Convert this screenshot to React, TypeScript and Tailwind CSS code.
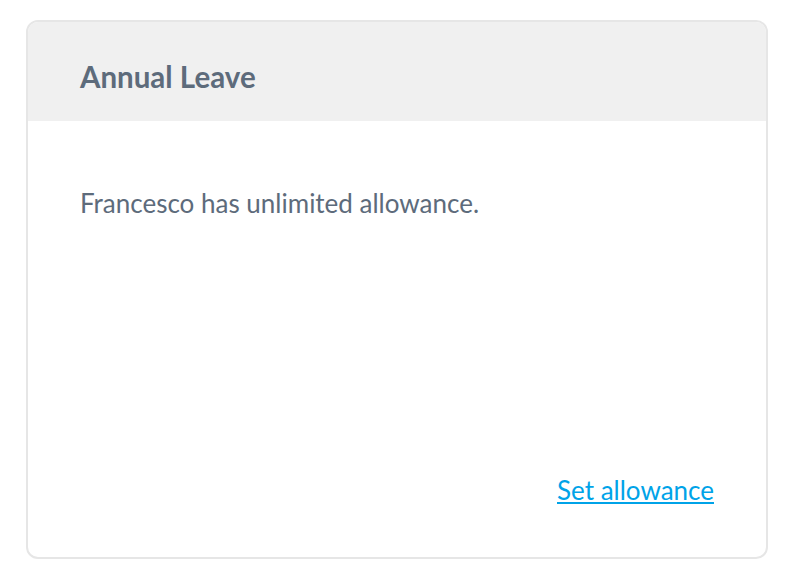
export default function App() {
  return (
    <div className="w-[791px] h-[581px] bg-white pt-[20px] pl-[26px] font-['Lato',sans-serif]">
      <div className="w-[742px] h-[539px] border-2 border-[#e6e6e6] rounded-[12px] overflow-hidden flex flex-col bg-white">
        <div className="h-[99px] bg-[#f0f0f0] flex items-center pl-[52px] pt-[10px]">
          <h2 className="text-[29.5px] font-bold text-[#5d6b7b] leading-none">Annual Leave</h2>
        </div>
        <div className="flex-1 flex flex-col px-[52px] pt-[67px] pb-[52px]">
          <p className="text-[26px] text-[#5d6b7b] leading-[30px]">Francesco has unlimited allowance.</p>
          <div className="mt-auto flex justify-end">
            <a href="#" className="text-[26px] text-[#00a3e8] underline leading-[30px]">
              Set allowance
            </a>
          </div>
        </div>
      </div>
    </div>
  );
}
